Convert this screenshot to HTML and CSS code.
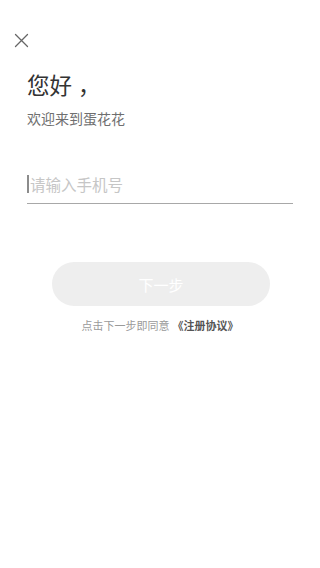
FILE: index.html
```html
<!DOCTYPE html>
<html lang="zh-CN">
<head>
<meta charset="utf-8">
<meta name="viewport" content="width=device-width, initial-scale=1">
<title>登录</title>
<link rel="stylesheet" href="styles.css">
</head>
<body>
<div class="page">
  <div class="topbar">
    <svg class="close" width="15" height="15" viewBox="0 0 15 15" aria-label="关闭">
      <path d="M1.5 1.5 L13.5 13.5 M13.5 1.5 L1.5 13.5" stroke="#666" stroke-width="1.3" fill="none" stroke-linecap="round"/>
    </svg>
  </div>
  <div class="intro">
    <h1 class="title">您好<span class="comma">，</span></h1>
    <p class="subtitle">欢迎来到蛋花花</p>
  </div>
  <div class="field">
    <span class="caret"></span>
    <span class="placeholder">请输入手机号</span>
  </div>
  <div class="actions">
    <button class="next" type="button">下一步</button>
    <p class="agree">点击下一步即同意<span class="link">《注册协议》</span></p>
  </div>
</div>
</body>
</html>
```

FILE: styles.css
```css
html, body {
  margin: 0;
  padding: 0;
  background: #ffffff;
}
body {
  font-family: "Noto Sans CJK SC", "Noto Sans", sans-serif;
  width: 320px;
  height: 568px;
  overflow: hidden;
}
.page {
  display: flex;
  flex-direction: column;
}
.topbar {
  padding: 33px 0 0 14px;
  height: 15px;
  display: flex;
}
.close {
  display: block;
}
.intro {
  padding: 21px 0 0 27px;
}
.title {
  margin: 0;
  font-size: 22.5px;
  line-height: 30px;
  font-weight: 400;
  color: #333333;
}
.comma {
  margin-left: 6px;
}
.subtitle {
  margin: 9px 0 0;
  font-size: 14px;
  line-height: 20px;
  color: #6f6f6f;
}
.field {
  margin: 36px 27px 0 27px;
  height: 39px;
  border-bottom: 1px solid #a8a8a8;
  display: flex;
  align-items: center;
}
.caret {
  width: 2px;
  height: 18px;
  background: #8c8c8c;
  margin-right: 1px;
}
.placeholder {
  font-size: 15.5px;
  line-height: 20px;
  color: #c6c6c6;
}
.actions {
  display: flex;
  flex-direction: column;
  align-items: center;
  padding-top: 58px;
}
.next {
  width: 218px;
  height: 44px;
  border: none;
  border-radius: 22px;
  background: #eeeeee;
  color: #ffffff;
  font-family: "Noto Sans CJK SC", "Noto Sans", sans-serif;
  font-size: 15px;
  padding: 0;
  margin-left: 2px;
}
.agree {
  margin: 11px 0 0;
  font-size: 11px;
  line-height: 16px;
  color: #9a9a9a;
}
.link {
  margin-left: 3px;
  color: #555555;
  font-weight: 700;
}
```
